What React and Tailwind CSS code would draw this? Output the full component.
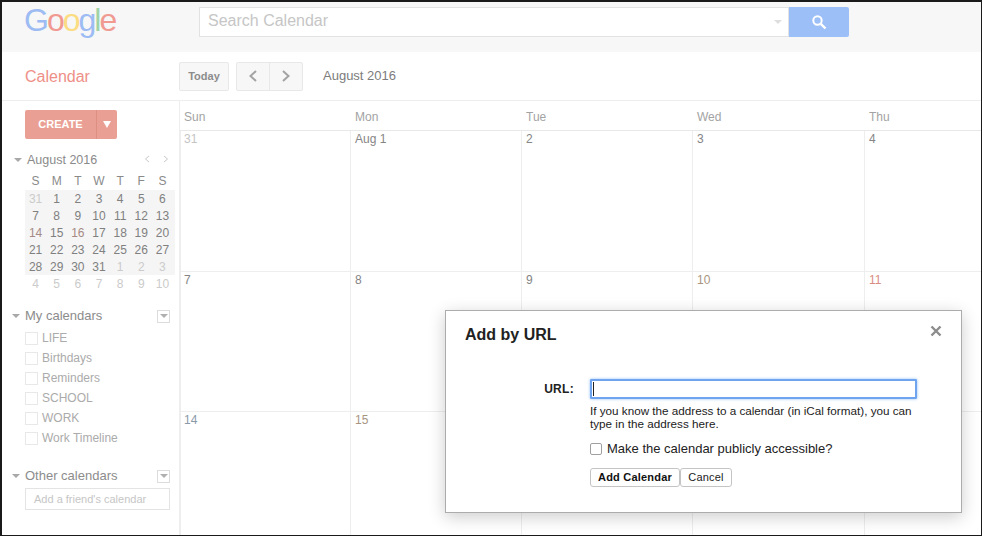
import React from "react";

const miniWeeks = [
  [31, 1, 2, 3, 4, 5, 6],
  [7, 8, 9, 10, 11, 12, 13],
  [14, 15, 16, 17, 18, 19, 20],
  [21, 22, 23, 24, 25, 26, 27],
  [28, 29, 30, 31, 1, 2, 3],
  [4, 5, 6, 7, 8, 9, 10],
];

// the days of the third row past 15 sit behind the dialog
const monthRows = [
  [
    { label: "31", color: "text-[#c4c4c4]" },
    { label: "Aug 1" },
    { label: "2" },
    { label: "3" },
    { label: "4" },
  ],
  [
    { label: "7" },
    { label: "8" },
    { label: "9" },
    { label: "10", color: "text-[#a8957f]" },
    { label: "11", color: "text-[#d98c84]" },
  ],
  [
    { label: "14", color: "text-[#8a9aa8]" },
    { label: "15", color: "text-[#a8957f]" },
    { label: "" },
    { label: "" },
    { label: "" },
  ],
];

const colWidths = ["w-[171px]", "w-[171px]", "w-[171px]", "w-[172px]", "flex-1"];

const SectionHeader = ({ title }) => (
  <div className="flex items-center h-5">
    <div className="w-0 h-0 ml-[10px] border-x-[4px] border-x-transparent border-t-[4px] border-t-[#a8a8a8]"></div>
    <span className="ml-[5px] text-[13px] text-[#8c8c8c]">{title}</span>
    <div className="ml-auto mr-[9px] w-[13px] h-[13px] border border-[#dcdcdc] flex items-center justify-center">
      <div className="w-0 h-0 border-x-[4px] border-x-transparent border-t-[4px] border-t-[#b0b0b0]"></div>
    </div>
  </div>
);

const App = () => {
  return (
    <div
      className="relative w-[982px] h-[536px] overflow-hidden bg-white border-t-2 border-l-2 border-r border-b border-[#1a1a1a] flex flex-col"
      style={{ fontFamily: '"Liberation Sans", Arial, sans-serif' }}
    >
      {/* top bar */}
      <div className="h-[50px] shrink-0 bg-[#f7f7f7] flex items-start">
        <div className="w-[197px] pl-[22px] -mt-[2px] text-[32px] leading-[40px] font-normal tracking-[-2px]">
          <span className="text-[#9dbcf3]">G</span>
          <span className="text-[#f09a92]">o</span>
          <span className="text-[#fbdc82]">o</span>
          <span className="text-[#9dbcf3]">g</span>
          <span className="text-[#9fd3a6]">l</span>
          <span className="text-[#f09a92]">e</span>
        </div>
        <div className="mt-[5px] w-[590px] h-[30px] bg-white border border-[#e2e2e2] flex items-center pl-[8px] pr-[6px]">
          <span className="text-[16px] leading-[20px] mb-[2px] text-[#c6c6c6]">Search Calendar</span>
          <div className="ml-auto w-0 h-0 border-x-[4px] border-x-transparent border-t-[4px] border-t-[#dedede]"></div>
        </div>
        <div className="mt-[5px] w-[60px] h-[30px] bg-[#9dbff8] rounded-r-[2px] flex items-center justify-center">
          <svg width="16" height="16" viewBox="0 0 16 16" fill="none" stroke="white">
            <circle cx="6.5" cy="6.5" r="4.2" strokeWidth="2" />
            <path d="M9.8 9.8 L14.5 14.5" strokeWidth="2.4" />
          </svg>
        </div>
      </div>

      {/* nav row */}
      <div className="h-[49px] shrink-0 border-b border-[#eeeeee] flex items-center">
        <div className="w-[177px] pl-[23px] pt-[2px] text-[16px] text-[#ee9088]">Calendar</div>
        <div className="w-[50px] h-[29px] bg-[#f7f7f7] border border-[#e8e8e8] rounded-[2px] flex items-center justify-center text-[11px] font-bold text-[#8c8c8c]">
          Today
        </div>
        <div className="ml-[7px] w-[67px] h-[29px] bg-[#f7f7f7] border border-[#e8e8e8] rounded-[2px] flex">
          <div className="flex-1 border-r border-[#e8e8e8] flex items-center justify-center">
            <svg width="10" height="14" viewBox="0 0 10 14" fill="none" stroke="#a3a3a3" strokeWidth="2">
              <path d="M8 2 L2.5 7 L8 12" />
            </svg>
          </div>
          <div className="flex-1 flex items-center justify-center">
            <svg width="10" height="14" viewBox="0 0 10 14" fill="none" stroke="#a3a3a3" strokeWidth="2">
              <path d="M2 2 L7.5 7 L2 12" />
            </svg>
          </div>
        </div>
        <div className="ml-[20px] text-[13px] text-[#7c7c7c]">August 2016</div>
      </div>

      <div className="flex flex-1 min-h-0">
        {/* sidebar */}
        <div className="w-[178px] shrink-0 border-r border-[#eeeeee]">
          <div className="mt-[9px] ml-[23px] w-[92px] h-[29px] bg-[#ea9f94] rounded-[2px] flex">
            <div className="w-[72px] border-r border-[#dd8f84] flex items-center justify-center text-[11px] font-bold text-white">
              CREATE
            </div>
            <div className="flex-1 flex items-center justify-center">
              <div className="w-0 h-0 border-x-[4px] border-x-transparent border-t-[7px] border-t-white"></div>
            </div>
          </div>

          {/* mini month */}
          <div className="mt-[13px] flex items-center h-4">
            <div className="w-0 h-0 ml-[12px] border-x-[4px] border-x-transparent border-t-[4px] border-t-[#a8a8a8]"></div>
            <span className="ml-[5px] text-[12.5px] text-[#8a8a8a]">August 2016</span>
            <svg className="ml-[47px] mb-[3px]" width="6" height="8" viewBox="0 0 6 8" fill="none" stroke="#c8c8c8">
              <path d="M5 1 L1.5 4 L5 7" />
            </svg>
            <svg className="ml-[13px] mb-[3px]" width="6" height="8" viewBox="0 0 6 8" fill="none" stroke="#c8c8c8">
              <path d="M1 1 L4.5 4 L1 7" />
            </svg>
          </div>
          <div className="ml-[23px] w-[150px] mt-[4px]">
            <div className="grid grid-cols-7 pr-[2px] h-[17px] items-center text-center text-[12px] text-[#8a8a8a]">
              {["S", "M", "T", "W", "T", "F", "S"].map((d, i) => (
                <span key={i}>{d}</span>
              ))}
            </div>
            <div className="bg-[#f5f5f5] mt-[1px] h-[85px]">
              {miniWeeks.map((week, w) => (
                <div key={w} className="grid grid-cols-7 pr-[2px] h-[17px] items-center text-center text-[12px] leading-none">
                  {week.map((d, i) => {
                    const other = (w === 0 && d === 31) || (w === 4 && d < 4) || w === 5;
                    const holiday = w === 2 && (i === 0 || i === 2);
                    return (
                      <span
                        key={i}
                        className={other ? "text-[#cbcbcb]" : holiday ? "text-[#a58a86]" : "text-[#808080]"}
                      >
                        {d}
                      </span>
                    );
                  })}
                </div>
              ))}
            </div>
          </div>

          {/* my calendars */}
          <div className="mt-[31px]">
            <SectionHeader title="My calendars" />
            <div className="mt-[2px]">
              {["LIFE", "Birthdays", "Reminders", "SCHOOL", "WORK", "Work Timeline"].map((name) => (
                <div key={name} className="h-5 flex items-center pl-[23px]">
                  <div className="w-[13px] h-[13px] border border-[#e8e8e8]"></div>
                  <span className="ml-[4px] text-[12px] text-[#ababab]">{name}</span>
                </div>
              ))}
            </div>
          </div>

          {/* other calendars */}
          <div className="mt-[18px]">
            <SectionHeader title="Other calendars" />
            <div className="ml-[23px] mr-[9px] mt-[2px] h-[22px] border border-[#e4e4e4] flex items-center pl-[8px] text-[11px] text-[#c6c6c6]">
              Add a friend's calendar
            </div>
          </div>
        </div>

        {/* month grid */}
        <div className="flex-1 min-w-0 flex flex-col">
          <div className="h-[30px] shrink-0 flex items-center pt-[3px] border-b border-[#e8e8e8]">
            {["Sun", "Mon", "Tue", "Wed", "Thu"].map((d, i) => (
              <div key={d} className={`${colWidths[i]} pl-[4px] text-[12px] text-[#a3a3a3]`}>
                {d}
              </div>
            ))}
          </div>
          {monthRows.map((row, r) => (
            <div
              key={r}
              className={`flex border-b border-[#eeeeee] shrink-0 ${r === 0 ? "h-[141px]" : "h-[140px]"}`}
            >
              {row.map((cell, i) => (
                <div
                  key={i}
                  className={`${colWidths[i]} ${i === 0 ? "border-l border-[#eeeeee] pl-[3px]" : "pl-[4px]"} ${i < 4 ? "border-r border-[#eeeeee]" : ""} text-[12px] leading-[16px] ${cell.color || "text-[#858585]"}`}
                >
                  {cell.label}
                </div>
              ))}
            </div>
          ))}
        </div>
      </div>

      {/* dialog */}
      <div className="absolute left-[443px] top-[308px] w-[517px] h-[203px] bg-white border border-[#acacac] shadow-[0_4px_16px_rgba(0,0,0,0.2)]">
        <div className="absolute left-[19px] top-[12px] text-[16px] font-bold text-[#222222]">Add by URL</div>
        <svg className="absolute right-[19px] top-[14px]" width="12" height="12" viewBox="0 0 12 12" stroke="#8c8c8c" strokeWidth="2.4">
          <path d="M1.5 1.5 L10.5 10.5 M10.5 1.5 L1.5 10.5" />
        </svg>
        <div className="pt-[68px] flex">
          <div className="w-[128px] text-right text-[12px] font-bold text-[#222222] leading-[20px] tracking-[0.3px]">URL:</div>
          <div className="ml-[16px] w-[327px]">
            <div className="h-[20px] border-2 border-[#6fa5ee] rounded-[1px] shadow-[0_0_3px_#8fbcf5] flex items-center pl-[1px]">
              <div className="w-px h-[14px] bg-[#222222]"></div>
            </div>
            <p className="mt-[5px] text-[11.7px] leading-[13px] text-[#222222]">
              If you know the address to a calendar (in iCal format), you can type in the address here.
            </p>
            <div className="mt-[9px] flex items-center">
              <div className="w-[12px] h-[12px] bg-white border border-[#a0a0a0] rounded-[2px]"></div>
              <span className="ml-[5px] text-[13px] text-[#222222]">Make the calendar publicly accessible?</span>
            </div>
            <div className="mt-[9px] flex">
              <div className="w-[90px] h-[19px] border border-[#c4c4c4] rounded-[3px] flex items-center justify-center text-[11px] font-bold text-[#111111] tracking-[0.2px]">
                Add Calendar
              </div>
              <div className="w-[52px] h-[19px] border border-[#c4c4c4] rounded-[3px] flex items-center justify-center text-[11px] text-[#222222] tracking-[0.2px]">
                Cancel
              </div>
            </div>
          </div>
        </div>
      </div>
    </div>
  );
};

export default App;
